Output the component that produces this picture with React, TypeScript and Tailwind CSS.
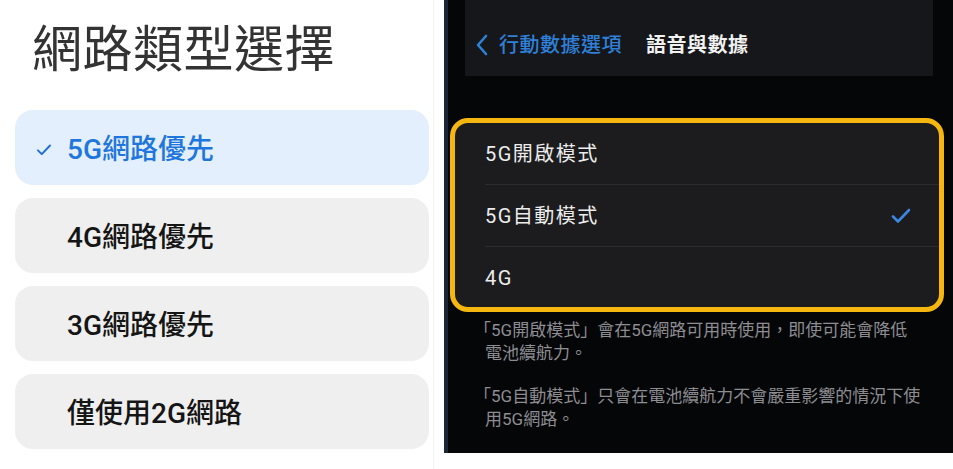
import React from "react";

const cjk = { fontFamily: "Roboto, 'Noto Sans CJK TC', sans-serif" };

const options = [
  { label: "5G網路優先", active: true },
  { label: "4G網路優先", active: false },
  { label: "3G網路優先", active: false },
  { label: "僅使用2G網路", active: false },
];

const iosRows = ["5G開啟模式", "5G自動模式", "4G"];

const Check = ({ className }: { className?: string }) => (
  <svg viewBox="0 0 24 24" fill="none" className={className}>
    <path d="M4 12.5l5 5L20 6" stroke="currentColor" strokeWidth="2.6" strokeLinecap="round" strokeLinejoin="round" />
  </svg>
);

const App = () => {
  return (
    <div className="w-[953px] h-[469px] bg-white flex overflow-hidden" style={cjk}>
      <div className="w-[434px] shrink-0 flex flex-col border-r border-[#f3f3f3] mr-[10px]">
        <h1 className="pl-[32px] pt-[19px] h-[110px] text-[50px] leading-[62px] font-normal text-[#333333] tracking-[0.5px]">
          網路類型選擇
        </h1>
        <div className="flex flex-col gap-[13px] pl-[15px] pr-[4px]">
          {options.map((o) => (
            <div
              key={o.label}
              className={
                o.active
                  ? "h-[75px] rounded-[18px] bg-[#e3effd] flex items-center pt-[4px]"
                  : "h-[75px] rounded-[18px] bg-[#efefef] flex items-center pt-[4px]"
              }
            >
              <div className="w-[52px] flex justify-end pr-[14px]">
                {o.active && <Check className="w-[18px] h-[18px] text-[#1f6fd6]" />}
              </div>
              <span
                className={
                  o.active
                    ? "text-[28px] font-medium text-[#1f76dc]"
                    : "text-[28px] font-medium text-[#151515]"
                }
              >
                {o.label}
              </span>
            </div>
          ))}
        </div>
      </div>

      <div className="w-[509px] h-[453px] bg-[#050608] border-l-4 border-[#1c2636] flex flex-col">
        <div className="ml-[17px] w-[468px] h-[76px] bg-[#16171b] flex items-center pt-[14px] pl-[10px] gap-[10px]">
          <svg viewBox="0 0 14 24" className="w-[14px] h-[24px] text-[#2f80d8]" fill="none">
            <path d="M11 3L3 12l8 9" stroke="currentColor" strokeWidth="2.6" strokeLinecap="round" strokeLinejoin="round" />
          </svg>
          <span className="text-[20px] tracking-[0.5px] text-[#2f80d8] font-medium">行動數據選項</span>
          <span className="ml-[14px] text-[20px] tracking-[0.5px] text-[#f2f2f2] font-bold">語音與數據</span>
        </div>

        <div className="mt-[42px] ml-[2px] w-[494px] h-[194px] border-[5px] border-[#f5b70f] rounded-[18px] bg-[#1c1c1e] flex flex-col overflow-hidden">
          {iosRows.map((r, i) => (
            <div key={r} className="h-[62px] shrink-0 pl-[30px] flex">
              <div
                className={
                  i < 2
                    ? "flex-1 flex items-center justify-between border-b border-[#2c2c30] pr-[26px]"
                    : "flex-1 flex items-center justify-between pr-[26px]"
                }
              >
                <span className="text-[20px] tracking-[1.5px] text-[#ececec]">{r}</span>
                {i === 1 && <Check className="w-[24px] h-[24px] text-[#3a86e0]" />}
              </div>
            </div>
          ))}
        </div>

        <div className="pl-[26px] pt-[7px] text-[17px] leading-[23px] text-[#8d8d92] flex flex-col gap-[20px]">
          <p>
            <span className="block">「5G開啟模式」會在5G網路可用時使用，即使可能會降低</span>
            <span className="block pl-[11px]">電池續航力。</span>
          </p>
          <p>
            <span className="block">「5G自動模式」只會在電池續航力不會嚴重影響的情況下使</span>
            <span className="block pl-[11px]">用5G網路。</span>
          </p>
        </div>
      </div>
    </div>
  );
};

export default App;
